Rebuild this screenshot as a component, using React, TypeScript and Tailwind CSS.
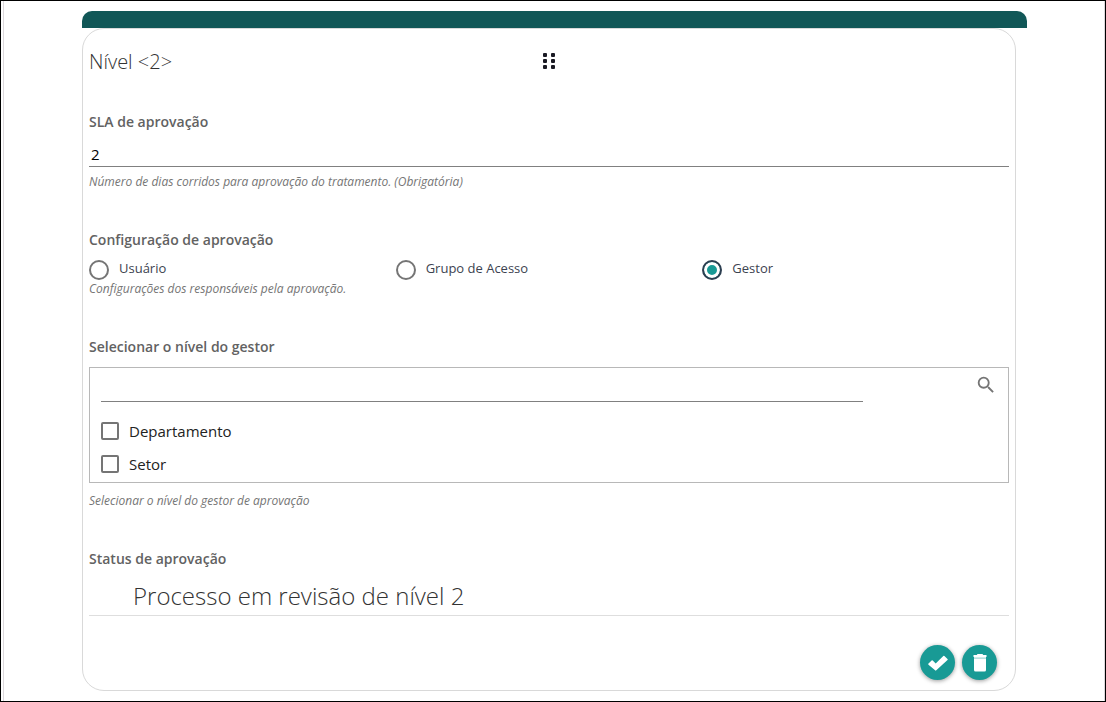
import { useState, type ReactNode } from "react";

const approvers = ["Usuário", "Grupo de Acesso", "Gestor"];
const managerLevels = ["Departamento", "Setor"];

export default function App() {
  const [approver, setApprover] = useState("Gestor");

  return (
    <div className="min-h-screen border border-black bg-white font-['Open_Sans',sans-serif]">
      <main className="ml-0.5 min-h-[700px] border-x border-[#dcd8dc] pt-2.5 pr-[77px] pl-[78px]">
        <div className="h-[17px] rounded-t-[10px] bg-[#115757]" />
        <form
          className="mr-[11px] rounded-[22px] border border-[#d9d9d9] px-1.5 pt-[19px] pb-2.5"
          onSubmit={(event) => event.preventDefault()}
        >
          <header className="grid grid-cols-[1fr_auto_1fr] items-center">
            <h1 className="text-xl leading-7 font-light text-[#333]">Nível &lt;2&gt;</h1>
            <button type="button" aria-label="Mover nível" className="cursor-move pb-0.5">
              <DragDots />
            </button>
          </header>

          <section className="mt-[34px]">
            <FieldLabel htmlFor="sla">SLA de aprovação</FieldLabel>
            <input
              id="sla"
              defaultValue="2"
              className="mt-2.5 block h-[23px] w-full border-b border-[#808080] px-0.5 pb-0.5 text-[15px] leading-5 text-black outline-none"
            />
            <div className="mt-[7px]">
              <Hint>Número de dias corridos para aprovação do tratamento. (Obrigatória)</Hint>
            </div>
          </section>

          <fieldset className="mt-[38px]">
            <legend className="text-sm leading-6 font-semibold text-[#626262]">Configuração de aprovação</legend>
            <div className="mt-2 mb-px grid grid-cols-3">
              {approvers.map((name) => (
                <label key={name} className="flex items-start gap-2.5 text-[13px] leading-4 text-[#3c4350]">
                  <input
                    type="radio"
                    name="approver"
                    checked={approver === name}
                    onChange={() => setApprover(name)}
                    className="size-5 shrink-0 appearance-none rounded-full border-2 border-[#757575] bg-white checked:border-[#2c3e50] checked:bg-[#189a95] checked:shadow-[inset_0_0_0_3px_white]"
                  />
                  {name}
                </label>
              ))}
            </div>
            <Hint>Configurações dos responsáveis pela aprovação.</Hint>
          </fieldset>

          <section className="mt-[38px]">
            <FieldLabel htmlFor="level-search">Selecionar o nível do gestor</FieldLabel>
            <div className="mt-2 border border-[#b8b8b8] px-[11px] pb-0.5">
              <div className="flex items-center justify-between">
                <input
                  id="level-search"
                  className="h-[34px] w-[85%] border-b border-[#808080] text-[15px] outline-none"
                />
                <button type="button" aria-label="Pesquisar" className="text-[#757575]">
                  <SearchIcon />
                </button>
              </div>
              <div className="mt-3">
                {managerLevels.map((level) => (
                  <label key={level} className="flex h-[33px] items-center gap-2.5 text-[15px] leading-5 text-[#222]">
                    <input
                      type="checkbox"
                      className="size-[18px] appearance-none rounded-xs border-2 border-[#757575] bg-white checked:bg-[#189a95]"
                    />
                    {level}
                  </label>
                ))}
              </div>
            </div>
            <div className="mt-2.5">
              <Hint>Selecionar o nível do gestor de aprovação</Hint>
            </div>
          </section>

          <section className="mt-[38px]">
            <FieldLabel htmlFor="status">Status de aprovação</FieldLabel>
            <input
              id="status"
              defaultValue="Processo em revisão de nível 2"
              className="block h-[45px] w-full border-b border-[#dedede] pt-1 pl-11 text-2xl font-light text-[#333] outline-none"
            />
          </section>

          <footer className="mt-[29px] flex justify-end gap-[7px] pr-3">
            <RoundButton label="Confirmar">
              <CheckIcon />
            </RoundButton>
            <RoundButton label="Excluir">
              <TrashIcon />
            </RoundButton>
          </footer>
        </form>
      </main>
    </div>
  );
}

function FieldLabel({ htmlFor, children }: { htmlFor: string; children: ReactNode }) {
  return (
    <label htmlFor={htmlFor} className="block text-sm leading-6 font-semibold text-[#626262]">
      {children}
    </label>
  );
}

function Hint({ children }: { children: ReactNode }) {
  return <p className="text-xs leading-4 text-[#757575] italic">{children}</p>;
}

function RoundButton({ label, children }: { label: string; children: ReactNode }) {
  return (
    <button
      type="button"
      aria-label={label}
      className="grid size-[35px] place-items-center rounded-full bg-[#189a95] text-white shadow-[0_1px_4px_rgba(0,0,0,0.4)]"
    >
      {children}
    </button>
  );
}

function DragDots() {
  return (
    <svg width="14" height="18" viewBox="0 0 14 18" fill="#1a1a24" aria-hidden="true">
      {[3, 9, 15].map((y) => (
        <g key={y}>
          <rect x="1" y={y - 2} width="4" height="4" rx="1" />
          <rect x="9" y={y - 2} width="4" height="4" rx="1" />
        </g>
      ))}
    </svg>
  );
}

function SearchIcon() {
  return (
    <svg width="22" height="22" viewBox="0 0 24 24" fill="currentColor" aria-hidden="true">
      <path d="M15.5 14h-.79l-.28-.27A6.47 6.47 0 0 0 16 9.5 6.5 6.5 0 1 0 9.5 16c1.61 0 3.09-.59 4.23-1.57l.27.28v.79l5 4.99L20.49 19l-4.99-5zm-6 0C7.01 14 5 11.99 5 9.5S7.01 5 9.5 5 14 7.01 14 9.5 11.99 14 9.5 14z" />
    </svg>
  );
}

function CheckIcon() {
  return (
    <svg width="20" height="16" viewBox="0 0 20 16" fill="currentColor" aria-hidden="true">
      <path d="M.5 8.6 3.6 5.5a.8.8 0 0 1 1.1 0l3 3L15.3.9a.8.8 0 0 1 1.1 0L19.5 4a.8.8 0 0 1 0 1.1L8.3 15.3a.8.8 0 0 1-1.2 0L.5 9.7a.8.8 0 0 1 0-1.1z" />
    </svg>
  );
}

function TrashIcon() {
  return (
    <svg width="14" height="18" viewBox="0 0 14 18" fill="currentColor" aria-hidden="true">
      <path d="M4.5 0h5l.7 1h3.3v2H.5V1h3.3z" />
      <path d="M1 3h12v1.500H1z" opacity=".8" />
      <path d="M1 4.500h12V16a1.500 1.500 0 0 1-1.500 1.500h-9A1.500 1.500 0 0 1 1 16z" />
    </svg>
  );
}
